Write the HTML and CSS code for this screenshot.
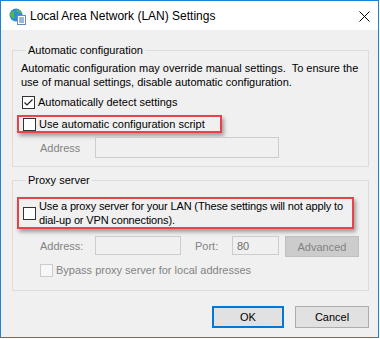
FILE: index.html
```html
<!DOCTYPE html>
<html lang="en">
<head>
    <meta charset="UTF-8">
    <title>Local Area Network (LAN) Settings</title>
    <link rel="stylesheet" href="styles.css">
</head>
<body>
    <div class="window">
        <div class="titlebar">
            <svg class="app-icon" width="17" height="17" viewBox="0 0 17 17">
                <circle cx="7" cy="7" r="6.5" fill="#2a8fd8"/>
                <path d="M3 3.5 C5 2.5 6 4 5 5.5 C4 7 6 8 5.5 10 C4 10.5 2.5 9 1.5 8 C1 6 1.5 4.5 3 3.5 Z" fill="#5cb83a"/>
                <path d="M8 1.5 C10 1.5 12 3 12.5 5 C11 5.5 9.5 4.5 8.5 4 C7.5 3.5 7 2 8 1.5 Z" fill="#5cb83a"/>
                <rect x="8.5" y="7.5" width="8" height="9" fill="#ffffff" stroke="#6a8bb5"/>
                <path d="M10 10h5M10 12h5M10 14h5" stroke="#3a6fb5"/>
            </svg>
            <span class="title">Local Area Network (LAN) Settings</span>
            <svg class="close" width="11" height="11" viewBox="0 0 11 11">
                <path d="M0.5 0.5 L10.5 10.5 M10.5 0.5 L0.5 10.5" stroke="#000" stroke-width="1"/>
            </svg>
        </div>

        <div class="content">
            <fieldset class="group">
                <legend>Automatic configuration</legend>
                <p class="description">Automatic configuration may override manual settings.&nbsp; To ensure the<br>use of manual settings, disable automatic configuration.</p>

                <div class="check-row first-check">
                    <span class="check">
                        <svg width="11" height="11" viewBox="0 0 11 11"><path d="M1.5 5.5 L4 8 L9.5 2.5" fill="none" stroke="#222" stroke-width="1.2"/></svg>
                    </span>
                    <span>Automatically detect settings</span>
                </div>

                <div class="check-row highlight script-row">
                    <span class="check"></span>
                    <span>Use automatic configuration script</span>
                </div>

                <div class="field-row">
                    <span class="field-label disabled">Address</span>
                    <span class="textbox script-address"></span>
                </div>
            </fieldset>

            <fieldset class="group proxy-group">
                <legend>Proxy server</legend>

                <div class="check-row highlight proxy-row">
                    <span class="check"></span>
                    <span class="proxy-text">Use a proxy server for your LAN (These settings will not apply to<br>dial-up or VPN connections).</span>
                </div>

                <div class="field-row proxy-fields">
                    <span class="field-label disabled">Address:</span>
                    <span class="textbox proxy-address"></span>
                    <span class="port-label disabled">Port:</span>
                    <span class="textbox port">80</span>
                    <span class="btn-disabled">Advanced</span>
                </div>

                <div class="check-row bypass-row disabled">
                    <span class="check check-disabled"></span>
                    <span>Bypass proxy server for local addresses</span>
                </div>
            </fieldset>

            <div class="buttons">
                <button class="btn btn-default">OK</button>
                <button class="btn">Cancel</button>
            </div>
        </div>
    </div>
</body>
</html>
```

FILE: styles.css
```css
body {
    margin: 0;
    font-family: "Liberation Sans", Arial, sans-serif;
    font-size: 11px;
    line-height: 14px;
    color: #000;
    background-color: #ffffff;
}
.window {
    width: 379px;
    height: 338px;
    box-sizing: border-box;
    border: 1px solid #1883d7;
    background-color: #f0f0f0;
    display: flex;
    flex-direction: column;
    overflow: hidden;
}
.titlebar {
    height: 29px;
    flex-shrink: 0;
    background-color: #ffffff;
    display: flex;
    align-items: center;
    padding-left: 8px;
    padding-right: 8px;
}
.app-icon {
    margin-right: 4px;
    margin-top: 1px;
}
.title {
    font-size: 12px;
    flex: 1;
}
.close {
    margin-top: 1px;
}
.content {
    flex: 1;
    padding: 13px 9px 0 11px;
}
.group {
    margin: 0;
    padding: 4px 8px 8px 8px;
    border: 1px solid #dcdcdc;
    border-radius: 0;
}
.group legend {
    padding: 0 2px;
    margin-left: 5px;
    line-height: 14px;
}
.description {
    margin: 0;
}
.check-row {
    display: flex;
    align-items: center;
}
.check {
    width: 11px;
    height: 11px;
    border: 1px solid #333333;
    background-color: #ffffff;
    margin-left: 1px;
    margin-right: 3px;
    flex-shrink: 0;
    display: flex;
}
.check-disabled {
    border-color: #cccccc;
    background-color: #f7f7f7;
}
.first-check {
    margin-top: 6px;
}
.highlight {
    border: 2px solid #e8434a;
    box-shadow: 2px 3px 4px rgba(0, 0, 0, 0.35);
    margin-left: -4px;
    padding-left: 3px;
}
.script-row {
    width: fit-content;
    padding-right: 15px;
    margin-top: 6px;
    height: 14px;
}
.proxy-row {
    margin-top: 6px;
    margin-right: 6px;
    height: 28px;
}
.proxy-text {
    white-space: nowrap;
    letter-spacing: -0.15px;
}
.field-row {
    display: flex;
    align-items: center;
    margin-top: 4px;
    height: 21px;
}
.disabled {
    color: #838383;
}
.field-label {
    margin-left: 19px;
    width: 55px;
}
.textbox {
    height: 19px;
    box-sizing: border-box;
    border: 1px solid #cccccc;
    background-color: #f0f0f0;
    display: flex;
    align-items: center;
    padding-left: 4px;
    color: #6d6d6d;
}
.script-address {
    width: 184px;
    height: 21px;
}
.proxy-fields {
    margin-top: 6px;
}
.proxy-address {
    width: 86px;
}
.port-label {
    margin-left: 14px;
    width: 37px;
}
.port {
    width: 47px;
}
.btn-disabled {
    margin-left: 6px;
    width: 74px;
    height: 21px;
    box-sizing: border-box;
    border: 1px solid #bfbfbf;
    background-color: #cccccc;
    color: #838383;
    display: flex;
    align-items: center;
    justify-content: center;
    margin-top: 2px;
}
.bypass-row {
    margin-top: 7px;
    margin-left: 18px;
    padding-bottom: 5px;
}
.proxy-group {
    margin-top: 6px;
}
.buttons {
    display: flex;
    justify-content: flex-end;
    gap: 11px;
    margin-top: 15px;
}
.btn {
    width: 74px;
    height: 22px;
    box-sizing: border-box;
    border: 1px solid #adadad;
    background-color: #e1e1e1;
    font-family: "Liberation Sans", Arial, sans-serif;
    font-size: 11px;
    color: #000;
    padding: 0;
}
.btn-default {
    width: 72px;
    border: 2px solid #0078d7;
}
```
